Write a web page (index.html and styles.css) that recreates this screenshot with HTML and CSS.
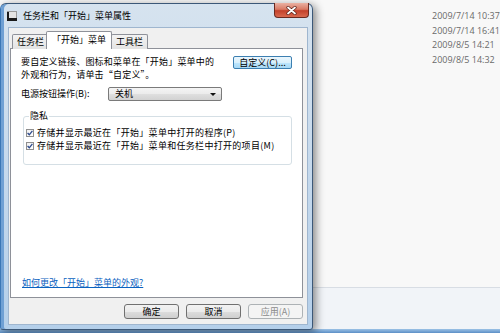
FILE: index.html
```html
<!DOCTYPE html>
<html lang="zh-CN">
<head>
    <meta charset="UTF-8">
    <title>任务栏和「开始」菜单属性</title>
    <link rel="stylesheet" href="styles.css">
</head>
<body>
    <div class="explorer">
        <div class="file-list">
            <div class="file-date">2009/7/14 10:37</div>
            <div class="file-date">2009/7/14 16:41</div>
            <div class="file-date">2009/8/5 14:21</div>
            <div class="file-date">2009/8/5 14:32</div>
        </div>
        <div class="details-pane"></div>
        <div class="taskbar"></div>
    </div>

    <div class="dialog">
        <div class="title-bar">
            <svg class="title-icon" width="10" height="10" viewBox="0 0 10 10">
                <rect x="0.5" y="0.5" width="9" height="9" fill="#e4e4e4" stroke="#9a9a9a"/>
                <rect x="0" y="7" width="10" height="3" fill="#1a1a1a"/>
                <rect x="0" y="1" width="2" height="8" fill="#1a1a1a"/>
            </svg>
            <span class="title-text">任务栏和「开始」菜单属性</span>
            <div class="close-btn">
                <svg width="11" height="9" viewBox="0 0 11 9">
                    <path d="M2 1.5 L9 7.5 M9 1.5 L2 7.5" stroke="#5a2018" stroke-width="3.2" stroke-linecap="round"/>
                    <path d="M2 1.5 L9 7.5 M9 1.5 L2 7.5" stroke="#ffffff" stroke-width="1.8" stroke-linecap="round"/>
                </svg>
            </div>
        </div>

        <div class="client">
            <div class="tabs">
                <div class="tab">任务栏</div>
                <div class="tab active">「开始」菜单</div>
                <div class="tab">工具栏</div>
            </div>

            <div class="panel">
                <div class="intro-row">
                    <p class="intro">要自定义链接、图标和菜单在「开始」菜单中的<br>外观和行为，请单击“自定义”。</p>
                    <button class="btn btn-focus">自定义(C)...</button>
                </div>

                <div class="power-row">
                    <span class="power-label">电源按钮操作(B):</span>
                    <div class="select">
                        <span>关机</span>
                        <span class="select-arrow"></span>
                    </div>
                </div>

                <fieldset class="group">
                    <legend>隐私</legend>
                    <div class="check-row">
                        <span class="checkbox">
                            <svg width="6" height="6" viewBox="0 0 6 6"><path d="M0.6 3 L2.3 4.8 L5.4 0.8" fill="none" stroke="#2d4a8c" stroke-width="1.3"/></svg>
                        </span>
                        存储并显示最近在「开始」菜单中打开的程序(P)
                    </div>
                    <div class="check-row">
                        <span class="checkbox">
                            <svg width="6" height="6" viewBox="0 0 6 6"><path d="M0.6 3 L2.3 4.8 L5.4 0.8" fill="none" stroke="#2d4a8c" stroke-width="1.3"/></svg>
                        </span>
                        存储并显示最近在「开始」菜单和任务栏中打开的项目(M)
                    </div>
                </fieldset>

                <a class="help-link" href="#">如何更改「开始」菜单的外观?</a>
            </div>

            <div class="dialog-buttons">
                <button class="btn">确定</button>
                <button class="btn">取消</button>
                <button class="btn" disabled>应用(A)</button>
            </div>
        </div>
    </div>
</body>
</html>
```

FILE: styles.css
```css
html, body {
    margin: 0;
    padding: 0;
}

body {
    width: 500px;
    height: 333px;
    overflow: hidden;
    position: relative;
    font-family: "Noto Sans CJK SC", "Noto Sans", sans-serif;
    font-size: 9px;
    color: #000;
    background-color: #f8f8f8;
}

/* background explorer window */
.explorer {
    height: 333px;
    display: flex;
    flex-direction: column;
}

.file-list {
    flex: 1;
    padding: 9px 0 0 432px;
    font-family: "Open Sans", "Noto Sans", sans-serif;
    font-size: 9px;
    line-height: 14.5px;
    color: #6a6a6a;
    white-space: nowrap;
}

.details-pane {
    height: 41px;
    background-color: #f1f4f8;
    border-top: 1px solid #d8dde4;
}

.taskbar {
    height: 4px;
    background: linear-gradient(to bottom, #9cc2e6, #5c8fc6);
}

/* dialog window */
.dialog {
    position: absolute;
    left: 0;
    top: 3px;
    width: 313px;
    height: 327px;
    box-sizing: border-box;
    border: 1px solid #3c5878;
    border-left-color: #3b77b6;
    border-radius: 6px 6px 3px 3px;
    background: linear-gradient(to bottom, #d6e3ef 0%, #c9dbed 40%, #b4cfea 100%);
    box-shadow: inset 3px 0 0 #6fa0d4, 3px 2px 9px rgba(0, 0, 0, 0.45);
    display: flex;
    flex-direction: column;
}

.title-bar {
    height: 23px;
    display: flex;
    align-items: center;
    padding-left: 6px;
}

.title-icon {
    margin-right: 6px;
    margin-top: 1px;
}

.title-text {
    flex: 1;
    line-height: 12px;
    margin-top: 1px;
}

.close-btn {
    align-self: flex-start;
    margin-right: 3px;
    margin-top: -1px;
    width: 35px;
    height: 15px;
    box-sizing: border-box;
    border: 1px solid #6a2a20;
    border-top: none;
    border-radius: 0 0 4px 4px;
    background: linear-gradient(to bottom, #eab1a2 0%, #d97a64 45%, #c3412b 55%, #d9694f 100%);
    display: flex;
    align-items: center;
    justify-content: center;
}

.client {
    flex: 1;
    margin: 0 4px 4px 7px;
    border: 1px solid #9fb6cf;
    background-color: #f0f0f0;
    padding: 3px 4px 5px 1px;
    display: flex;
    flex-direction: column;
}

/* tabs */
.tabs {
    display: flex;
    align-items: flex-end;
    padding-left: 2px;
    position: relative;
    z-index: 1;
    margin-bottom: -1px;
}

.tab {
    height: 14px;
    line-height: 14px;
    padding: 0 4px;
    border: 1px solid #8e9199;
    border-bottom: none;
    border-radius: 2px 2px 0 0;
    background: linear-gradient(to bottom, #f3f3f3, #e3e3e3);
    margin-right: -1px;
}

.tab.active {
    height: 17px;
    line-height: 15px;
    padding: 0 5px;
    margin: 0 -1px 0 -2px;
    background: #fff;
    position: relative;
    z-index: 2;
}

.panel {
    flex: 1;
    background-color: #fff;
    border: 1px solid #8e9199;
    padding: 6px 10px 8px 10px;
    display: flex;
    flex-direction: column;
}

.intro-row {
    display: flex;
    justify-content: space-between;
    align-items: flex-start;
}

.intro {
    margin: 0;
    line-height: 13px;
    letter-spacing: 0.2px;
}

.btn {
    font-family: "Noto Sans CJK SC", "Noto Sans", sans-serif;
    font-size: 9px;
    color: #000;
    height: 15px;
    width: 55px;
    padding: 0;
    line-height: 12px;
    border: 1px solid #707070;
    border-radius: 3px;
    background: linear-gradient(to bottom, #f2f2f2 0%, #ebebeb 50%, #dddddd 51%, #cfcfcf 100%);
}

.btn-focus {
    width: 59px;
    height: 13px;
    margin-top: 1px;
    border-color: #3c7fb1;
    border-radius: 2px;
    background: linear-gradient(to bottom, #eaf6fd 0%, #d9f0fc 50%, #bee6fd 51%, #a7d9f5 100%);
    line-height: 10px;
}

.btn:disabled {
    color: #8b8b8b;
    border-color: #adb2b5;
    background: #f4f4f4;
}

.power-row {
    display: flex;
    align-items: center;
    margin-top: 6px;
}

.power-label {
    width: 87px;
    line-height: 12px;
}

.select {
    width: 114px;
    height: 14px;
    box-sizing: border-box;
    border: 1px solid #7a7a7a;
    border-radius: 2px;
    background: linear-gradient(to bottom, #f4f4f4 0%, #ebebeb 50%, #dfdfdf 51%, #d2d2d2 100%);
    display: flex;
    align-items: center;
    justify-content: space-between;
    padding: 0 5px 0 6px;
    line-height: 12px;
}

.select-arrow {
    width: 0;
    height: 0;
    border-left: 3px solid transparent;
    border-right: 3px solid transparent;
    border-top: 3px solid #111;
}

.group {
    margin: 10px 0 0 2px;
    width: 269px;
    box-sizing: border-box;
    border: 1px solid #d5dfe5;
    border-radius: 3px;
    padding: 0 2px 12px 2px;
}

.group legend {
    margin-left: 3px;
    padding: 0 1px;
    line-height: 10px;
}

.check-row {
    display: flex;
    align-items: center;
    height: 13px;
    white-space: nowrap;
    letter-spacing: 0.3px;
}

.check-row:first-of-type {
    margin-top: 5px;
}

.checkbox {
    width: 8px;
    height: 8px;
    box-sizing: border-box;
    border: 1px solid #8f8f8f;
    background: linear-gradient(to bottom right, #f0f0f0, #ffffff);
    margin-right: 3px;
    display: flex;
    align-items: center;
    justify-content: center;
}

.help-link {
    margin-top: auto;
    margin-left: 1px;
    line-height: 12px;
    color: #0a62c0;
    text-decoration: underline;
}

.dialog-buttons {
    display: flex;
    justify-content: flex-end;
    gap: 7px;
    margin-top: 6px;
}
```
